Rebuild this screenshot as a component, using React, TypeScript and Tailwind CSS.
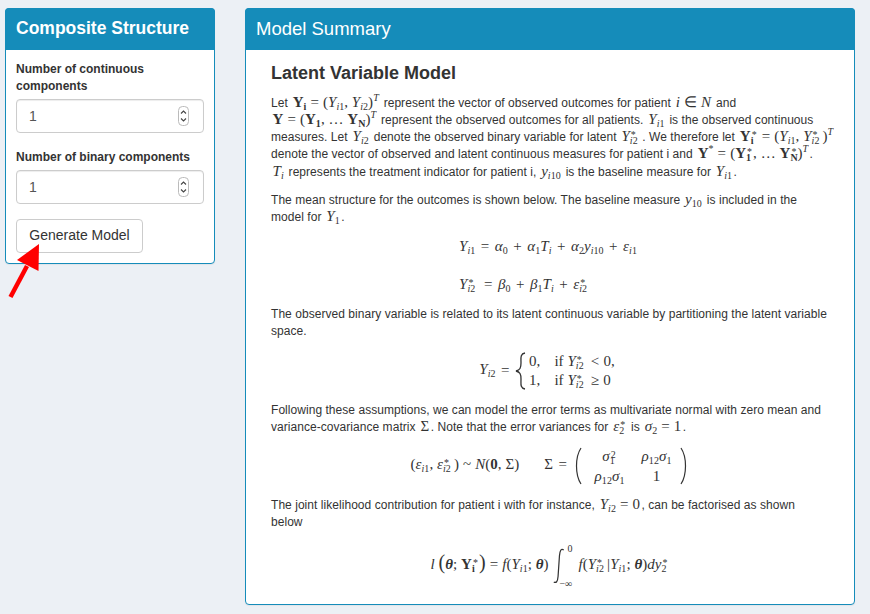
import type { ReactNode } from "react";

const I = ({ children }: { children: ReactNode }) => <i className="italic">{children}</i>;
const B = ({ children }: { children: ReactNode }) => <b className="font-bold">{children}</b>;
// digits stay upright in MathJax scripts, letters go italic
const Script = ({ t }: { t: string }) => (
  <>
    {t.split(/(\d+|\*)/).map((part, i) =>
      /\d|\*/.test(part) ? <span key={i}>{part}</span> : <i key={i}>{part}</i>
    )}
  </>
);
const Sub = ({ t, bold }: { t: string; bold?: boolean }) => (
  <span className="text-[10px] leading-[0] align-[-3px]">
    {bold ? <b className="font-bold">{t}</b> : <Script t={t} />}
  </span>
);
const Sup = ({ t }: { t: string }) => (
  <span className="text-[10px] leading-[0] align-[6px]">
    <Script t={t} />
  </span>
);
// sub and superscript stacked over each other, like Y*_i2
const Both = ({ sup, sub, bold }: { sup: string; sub: string; bold?: boolean }) => (
  <span className={`relative inline-block h-[1px] align-baseline text-[10px] leading-[10px] ${sub.length > 1 ? "w-[11px]" : "w-[7px]"}`}>
    <span className="absolute left-[1px] bottom-[1px]"><Script t={sup} /></span>
    <span className="absolute left-0 top-[-4px]">{bold ? <b className="font-bold">{sub}</b> : <Script t={sub} />}</span>
  </span>
);
const Op = ({ c }: { c: string }) => <span className="mx-[4px]">{c}</span>;
const WideOp = ({ c }: { c: string }) => <span className="mx-[5.5px]">{c}</span>;
const M = ({ children }: { children: ReactNode }) => (
  <span className="font-['Liberation_Serif',serif] text-[15px] leading-[0] whitespace-nowrap mx-[1.5px]">{children}</span>
);
const Y = ({ s }: { s: string }) => (
  <>
    <I>Y</I>
    <Sub t={s} />
  </>
);
const Ys = () => (
  <>
    <I>Y</I>
    <Both sup="*" sub="i2" />
  </>
);

const Eq = ({ h, children }: { h: string; children: ReactNode }) => (
  <div className={`${h} flex items-center font-['Liberation_Serif',serif] text-[15px] leading-[17px] text-[#333] whitespace-nowrap`}>
    <div>{children}</div>
  </div>
);

const Stepper = () => (
  <svg className="absolute right-[15px] top-[7px]" width="11" height="20" viewBox="0 0 11 20" fill="none">
    <rect x="0.5" y="0.5" width="10" height="19" rx="4" fill="#fff" stroke="#bbb" />
    <path d="M3 7.5 L5.5 5 L8 7.5 M3 12.5 L5.5 15 L8 12.5" stroke="#444" strokeWidth="1.1" />
  </svg>
);

const NumberField = ({ label }: { label: string }) => (
  <div className="mb-[16px]">
    <label className="block font-bold text-[12px] leading-[17px] text-[#333] mb-[4px]">{label}</label>
    <div className="relative">
      <input
        type="text"
        readOnly
        value="1"
        className="w-full h-[34px] px-[12px] border border-[#ccc] rounded-[4px] bg-white text-[14px] text-[#555] shadow-[inset_0_1px_1px_rgba(0,0,0,0.075)] outline-none"
      />
      <Stepper />
    </div>
  </div>
);

const Panel = ({ title, bold, className, children }: { title: string; bold?: boolean; className: string; children: ReactNode }) => (
  <div className={`${className} bg-white border border-[#158cba] rounded-[4px] shadow-[0_1px_1px_rgba(0,0,0,0.05)]`}>
    <div className={`h-[42px] -mt-[1px] -mx-[1px] px-[11px] flex items-center bg-[#158cba] rounded-t-[4px] text-white ${bold ? "font-bold text-[17.5px]" : "text-[18.5px]"}`}>
      {title}
    </div>
    {children}
  </div>
);

export default function App() {
  return (
    <div className="relative min-h-[614px] bg-[#ecf0f5] font-['Liberation_Sans',Arial,sans-serif] text-[12px] leading-[17.14px] text-[#333] overflow-hidden">
      <div className="flex items-start gap-[30px] pl-[5px] pt-[8px]">
        <Panel title="Composite Structure" bold className="w-[210px] shrink-0">
          <div className="px-[10px] pt-[11px] pb-[10px]">
            <NumberField label="Number of continuous components" />
            <NumberField label="Number of binary components" />
            <button className="h-[34px] w-[127px] -mt-[1px] border border-[#ccc] rounded-[4px] bg-white text-[14px] text-[#333] block">
              Generate Model
            </button>
          </div>
        </Panel>

        <Panel title="Model Summary" className="w-[610px] h-[597px] shrink-0">
          <div className="pl-[25px] pr-[20px] pt-[13px] tracking-[0.045px]">
            <h3 className="text-[18px] leading-[20px] font-bold text-[#333] mb-[12px] tracking-normal">Latent Variable Model</h3>

            <p className="mb-[11px] whitespace-nowrap">
              Let <M><B>Y</B><Sub t="i" bold /><Op c="=" />(<Y s="i1" />, <Y s="i2" />)<Sup t="T" /></M> represent the vector of observed outcomes for patient <M><I>i</I><Op c="∈" /><I>N</I></M> and
              <br />
              <M><B>Y</B><Op c="=" />(<B>Y</B><Sub t="1" bold />, … <B>Y</B><Sub t="N" bold />)<Sup t="T" /></M> represent the observed outcomes for all patients. <M><Y s="i1" /></M> is the observed continuous
              <br />
              measures. Let <M><Y s="i2" /></M> denote the observed binary variable for latent <M><Ys /></M>. We therefore let <M><B>Y</B><Both sup="*" sub="i" bold /><Op c="=" />(<Y s="i1" />, <Ys />)<Sup t="T" /></M>
              <br />
              denote the vector of observed and latent continuous measures for patient i and <M><B>Y</B><Sup t="*" /><Op c="=" />(<B>Y</B><Both sup="*" sub="1" bold />, … <B>Y</B><Both sup="*" sub="N" bold />)<Sup t="T" /></M>.
              <br />
              <M><I>T</I><Sub t="i" /></M> represents the treatment indicator for patient i, <M><I>y</I><Sub t="i10" /></M> is the baseline measure for <M><Y s="i1" /></M>.
            </p>

            <p className="mb-0">
              The mean structure for the outcomes is shown below. The baseline measure <M><I>y</I><Sub t="10" /></M> is included in the
              <br />
              model for <M><I>Y</I><Sub t="1" /></M>.
            </p>

            <div className="w-fit ml-[188px] mb-[3px]">
              <Eq h="h-[41px]">
                <Y s="i1" /><WideOp c="=" /><I>α</I><Sub t="0" /><WideOp c="+" /><I>α</I><Sub t="1" /><I>T</I><Sub t="i" /><WideOp c="+" /><I>α</I><Sub t="2" /><I>y</I><Sub t="i10" /><WideOp c="+" /><I>ε</I><Sub t="i1" />
              </Eq>
              <Eq h="h-[36px]">
                <Ys /><WideOp c="=" /><I>β</I><Sub t="0" /><WideOp c="+" /><I>β</I><Sub t="1" /><I>T</I><Sub t="i" /><WideOp c="+" /><I>ε</I><Both sup="*" sub="i2" />
              </Eq>
            </div>

            <p className="mb-[7px]">
              The observed binary variable is related to its latent continuous variable by partitioning the latent variable
              <br />
              space.
            </p>

            <Eq h="h-[48px] mb-[7px] justify-center pr-[11px]">
              <Y s="i2" /><WideOp c="=" />
              <svg width="11" height="38" viewBox="0 0 11 38" fill="none" className="inline-block align-middle mr-[3px]">
                <path d="M10 1 C5 2 6 6 6 11 C6 16 5 18 1 19 C5 20 6 22 6 27 C6 32 5 36 10 37" stroke="#333" strokeWidth="1.3" />
              </svg>
              <div className="inline-grid align-middle grid-cols-[auto_auto] gap-x-[14px] gap-y-[2px] leading-[17px]">
                <span>0,</span>
                <span>if <Ys /><Op c="<" />0,</span>
                <span>1,</span>
                <span>if <Ys /><Op c="≥" />0</span>
              </div>
            </Eq>

            <p className="mb-[6px]">
              Following these assumptions, we can model the error terms as multivariate normal with zero mean and
              <br />
              variance-covariance matrix <M>Σ</M>. Note that the error variances for <M><I>ε</I><Both sup="*" sub="2" /></M> is <M><I>σ</I><Sub t="2" /><Op c="=" />1</M>.
            </p>

            <Eq h="h-[46px] mb-[8px] justify-center pr-[6px]">
              <span>(<I>ε</I><Sub t="i1" />, <I>ε</I><Both sup="*" sub="i2" />)<Op c="~" /><I>N</I>(<B>0</B>, Σ)</span>
              <span className="ml-[25px]">Σ<WideOp c="=" /></span>
              <svg width="9" height="38" viewBox="0 0 9 38" fill="none" className="inline-block align-middle">
                <path d="M8 1 C2 10 2 28 8 37" stroke="#333" strokeWidth="1.2" />
              </svg>
              <div className="inline-grid align-middle grid-cols-[52px_42px] justify-items-center leading-[20px] mx-[2px]">
                <span><I>σ</I><Both sup="2" sub="1" /></span>
                <span><I>ρ</I><Sub t="12" /><I>σ</I><Sub t="1" /></span>
                <span><I>ρ</I><Sub t="12" /><I>σ</I><Sub t="1" /></span>
                <span>1</span>
              </div>
              <svg width="9" height="38" viewBox="0 0 9 38" fill="none" className="inline-block align-middle">
                <path d="M1 1 C7 10 7 28 1 37" stroke="#333" strokeWidth="1.2" />
              </svg>
            </Eq>

            <p className="mb-[8px]">
              The joint likelihood contribution for patient i with for instance, <M><Y s="i2" /><Op c="=" />0</M>, can be factorised as shown
              <br />
              below
            </p>

            <Eq h="h-[54px] justify-center pr-[6px]">
              <I>l</I> <span className="text-[20px] leading-[0]">(</span><I><B>θ</B></I>; <B>Y</B><Both sup="*" sub="i" bold /><span className="text-[20px] leading-[0]">)</span><Op c="=" /><I>f</I>(<Y s="i1" />; <I><B>θ</B></I>){" "}
              <span className="relative inline-block align-middle w-[26px] h-[36px]">
                <svg className="absolute left-0 top-0" width="14" height="36" viewBox="0 0 14 38" fill="none">
                  <path d="M12 2 C9 0 8 3 7.5 8 L6 30 C5.5 36 4 37 1.5 36" stroke="#333" strokeWidth="1.3" />
                </svg>
                <span className="absolute left-[15px] top-[-4px] text-[10px] leading-[10px]">0</span>
                <span className="absolute left-[7px] bottom-[-5px] text-[10px] leading-[10px]">−∞</span>
              </span>
              <I>f</I>(<Ys />|<Y s="i1" />; <I><B>θ</B></I>)<I>dy</I><Both sup="*" sub="2" />
            </Eq>
          </div>
        </Panel>
      </div>

      <svg className="absolute left-0 top-0" width="60" height="310" viewBox="0 0 60 310" fill="none">
        <path d="M10.5 297 L27 266" stroke="#ff0000" strokeWidth="4.5" />
        <path d="M39 244 L38.5 271 L17 260 Z" fill="#ff0000" />
      </svg>
    </div>
  );
}
